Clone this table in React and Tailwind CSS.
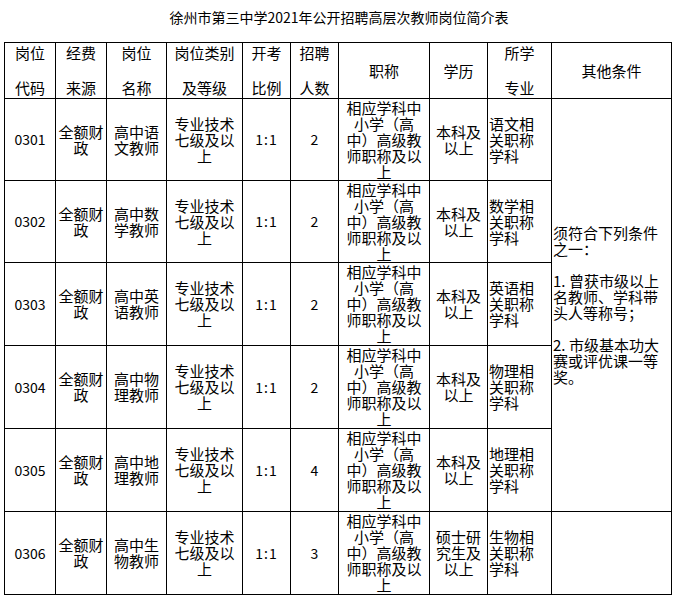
import React from "react";

const rows = [
  { code: "0301", pos: ["高中语", "文教师"], n: "2", edu: ["本科及", "以上"], major: ["语文相", "关职称", "学科"] },
  { code: "0302", pos: ["高中数", "学教师"], n: "2", edu: ["本科及", "以上"], major: ["数学相", "关职称", "学科"] },
  { code: "0303", pos: ["高中英", "语教师"], n: "2", edu: ["本科及", "以上"], major: ["英语相", "关职称", "学科"] },
  { code: "0304", pos: ["高中物", "理教师"], n: "2", edu: ["本科及", "以上"], major: ["物理相", "关职称", "学科"] },
  { code: "0305", pos: ["高中地", "理教师"], n: "4", edu: ["本科及", "以上"], major: ["地理相", "关职称", "学科"] },
  { code: "0306", pos: ["高中生", "物教师"], n: "3", edu: ["硕士研", "究生及", "以上"], major: ["生物相", "关职称", "学科"] },
];

const cell = "border-r border-b border-black flex flex-col justify-center";

function Lines({ lines, align = "center", lh = "leading-[16px]" }) {
  return (
    <div className={align === "left" ? "text-left pl-[1px]" : "text-center"}>
      {lines.map((l, i) => (
        <div key={i} className={lh + " whitespace-nowrap"}>
          {l}
        </div>
      ))}
    </div>
  );
}

function Head2({ a, b }) {
  return (
    <div className="border-r border-b border-black flex flex-col items-center text-center">
      <div className="mt-[2px] leading-[16px]">{a}</div>
      <div className="mt-[19px] leading-[16px]">{b}</div>
    </div>
  );
}

function Head1({ t }) {
  return (
    <div className="border-r border-b border-black flex items-center justify-center">
      <div className="leading-[16px]">{t}</div>
    </div>
  );
}

const Num = ({ n, rest }) => (
  <>
    <span className="inline-block w-[16px]">{n}</span>
    {rest}
  </>
);

export default function App() {
  return (
    <div className="w-[678px] h-[597px] bg-white text-black font-['Noto_Sans_CJK_SC','Noto_Sans',sans-serif]">
      <div className="h-[42px] pt-[9px] text-center text-[14px] leading-[16px]">
        徐州市第三中学2021年公开招聘高层次教师岗位简介表
      </div>
      <div className="ml-[4px] w-[668px] grid grid-cols-[51px_51px_60px_76px_48px_48px_91px_58px_64px_120px] grid-rows-[56px_82px_82px_83px_83px_83px_83px] border-l border-t border-black text-[15px]">
        <Head2 a="岗位" b="代码" />
        <Head2 a="经费" b="来源" />
        <Head2 a="岗位" b="名称" />
        <Head2 a="岗位类别" b="及等级" />
        <Head2 a="开考" b="比例" />
        <Head2 a="招聘" b="人数" />
        <Head1 t="职称" />
        <Head1 t="学历" />
        <Head2 a="所学" b="专业" />
        <Head1 t="其他条件" />

        {rows.map((r, i) => (
          <React.Fragment key={r.code}>
            <div className={cell + " items-center text-[14px]"}>{r.code}</div>
            <div className={cell}>
              <Lines lines={["全额财", "政"]} />
            </div>
            <div className={cell}>
              <Lines lines={r.pos} />
            </div>
            <div className={cell}>
              <Lines lines={["专业技术", "七级及以", "上"]} />
            </div>
            <div className={cell + " items-center text-[14px] tracking-[1px]"}>1:1</div>
            <div className={cell + " items-center text-[14px]"}>{r.n}</div>
            <div className={cell}>
              <Lines lines={["相应学科中", "小学（高", "中）高级教", "师职称及以", "上"]} />
            </div>
            <div className={cell}>
              <Lines lines={r.edu} />
            </div>
            <div className={cell}>
              <Lines lines={r.major} align="left" />
            </div>
            {i === 0 && (
              <div className={cell + " row-span-5"}>
                <Lines
                  align="left"
                  lines={[
                    "须符合下列条件",
                    "之一：",
                    "\u00a0",
                    <Num key="a" n="1." rest="曾获市级以上" />,
                    "名教师、学科带",
                    "头人等称号；",
                    "\u00a0",
                    <Num key="b" n="2." rest="市级基本功大" />,
                    "赛或评优课一等",
                    "奖。",
                  ]}
                />
              </div>
            )}
            {i === 5 && <div className={cell}></div>}
          </React.Fragment>
        ))}
      </div>
    </div>
  );
}
